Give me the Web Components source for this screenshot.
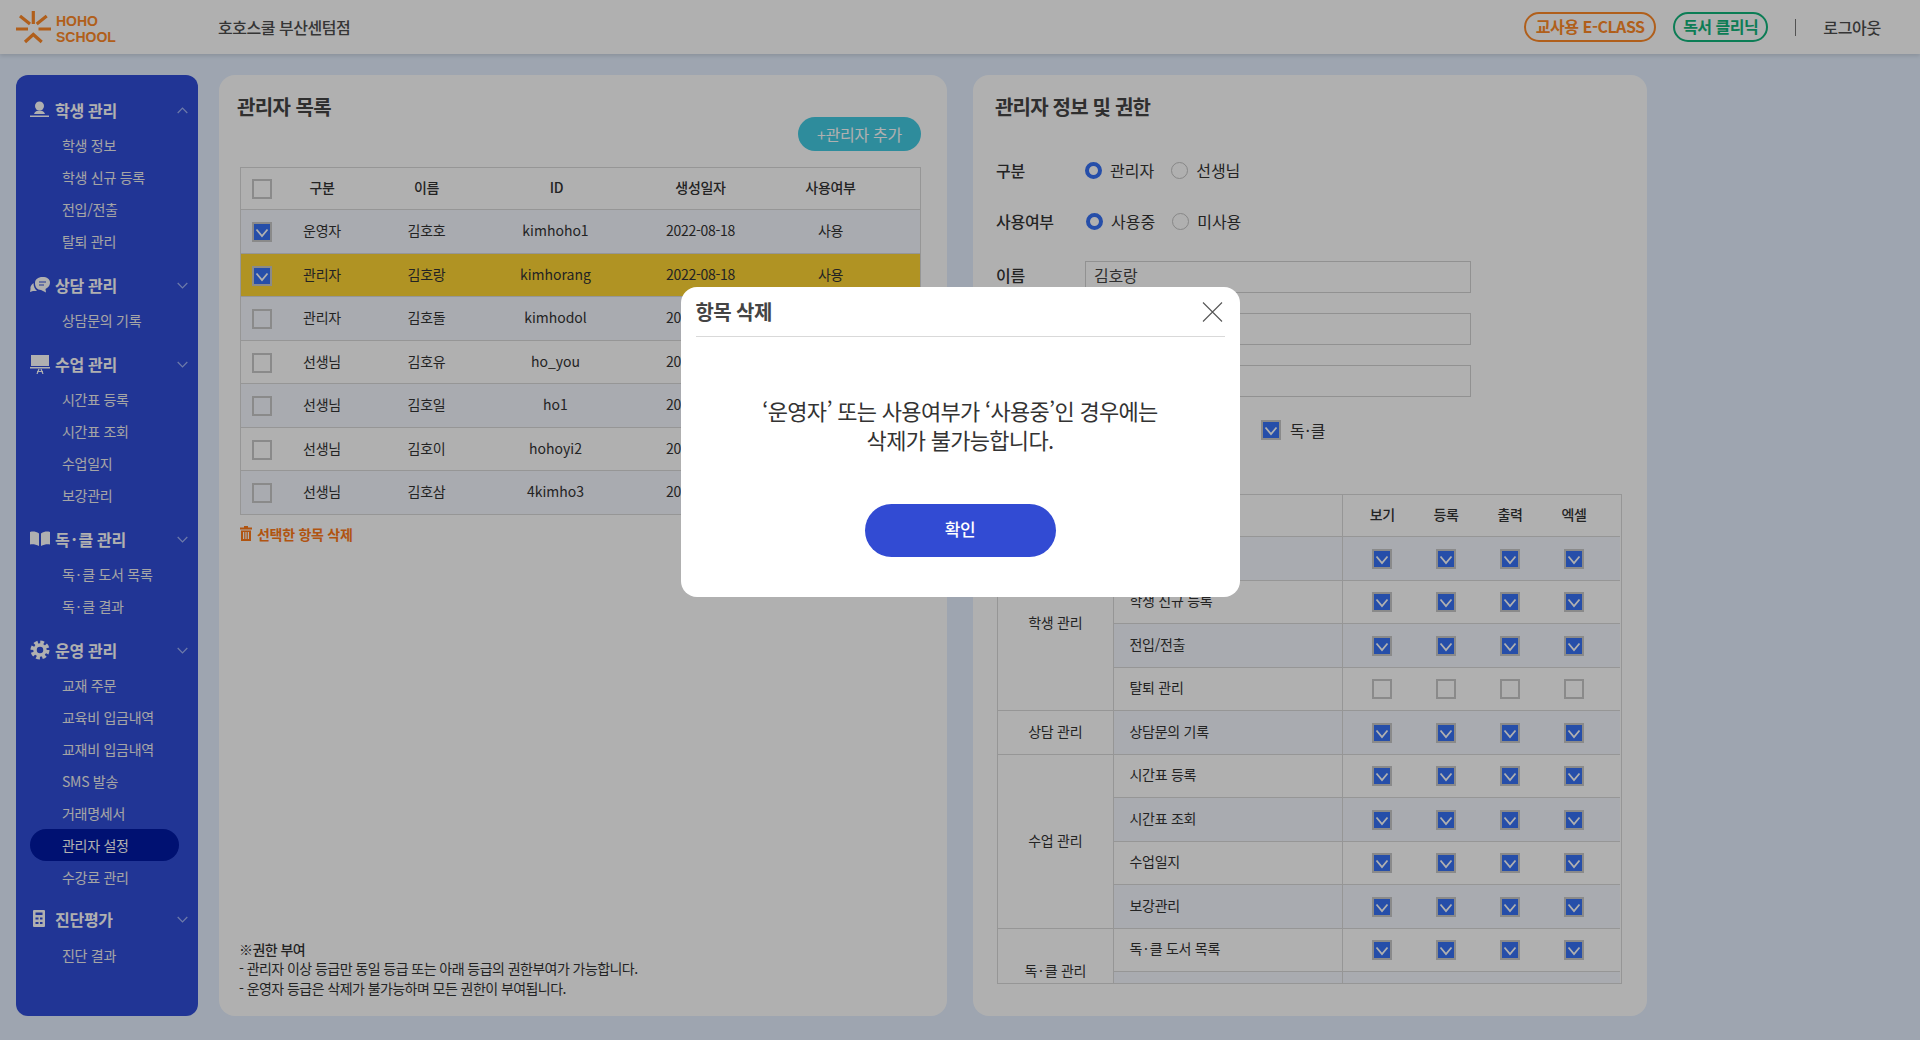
<!DOCTYPE html>
<html lang="ko">
<head>
<meta charset="utf-8">
<title>호호스쿨 관리자 설정</title>
<style>
  html, body { margin: 0; height: 100%; }
  body {
    background: #e5f0ff;
    color: #333;
    font-family: "Noto Sans CJK KR", "Noto Sans", sans-serif;
    font-size: 14px;
    letter-spacing: -0.02em;
    overflow: hidden;
  }
  .layout {
    display: grid;
    grid-template-columns: 182px 728px 679px;
    column-gap: 21px;
    height: 941px;
    padding: 21px 0 0 16px;
  }
  admin-detail { margin-left: 5px; }
</style>
</head>
<body>
<top-bar></top-bar>
<div class="layout">
  <side-nav></side-nav>
  <admin-list></admin-list>
  <admin-detail></admin-detail>
</div>
<confirm-modal title-text="항목 삭제" button-text="확인">
  ‘운영자’ 또는 사용여부가 ‘사용중’인 경우에는<br>삭제가 불가능합니다.
</confirm-modal>

<script>
// the middle dot sits wider in the reference than the font gives it
const DOT_CSS = '.dot { margin: 0 2px; }';
const dotted = (text) => text.replace('·', '<span class="dot">·</span>');

// small form controls
class CheckBox extends HTMLElement {
  connectedCallback() {
    const shadow = this.attachShadow({ mode: 'open' });
    const checked = this.hasAttribute('checked');
    shadow.innerHTML = `
      <style>
        :host { display: inline-block; width: 20px; height: 20px; vertical-align: middle; }
        .box { box-sizing: border-box; width: 20px; height: 20px; border: 2px solid #c8c8c8; background: ${checked ? '#3772f5' : 'transparent'}; }
        svg { display: block; }
      </style>
      <div class="box">${checked ? '<svg width="16" height="16" viewBox="0 0 16 16"><path d="M2.5 5.5 8 12l5.5-6.5" fill="none" stroke="#fff" stroke-width="1.8"/></svg>' : ''}</div>`;
  }
}
customElements.define('check-box', CheckBox);

class RadioOption extends HTMLElement {
  connectedCallback() {
    const shadow = this.attachShadow({ mode: 'open' });
    const on = this.hasAttribute('checked');
    shadow.innerHTML = `
      <style>
        :host { display: inline-flex; align-items: center; gap: 8px; font-size: 16px; line-height: 26px; letter-spacing: 0; }
        i { box-sizing: border-box; width: 17px; height: 17px; border-radius: 50%;
            border: ${on ? '4px solid #3772f5' : '1.5px solid #c4c4c4'}; }
      </style>
      <i></i><slot></slot>`;
  }
}
customElements.define('radio-option', RadioOption);

// header
class TopBar extends HTMLElement {
  connectedCallback() {
    this.attachShadow({ mode: 'open' }).innerHTML = `
      <style>
        :host { display: flex; align-items: center; height: 54px; padding: 0 39px 0 16px; background: #fff; box-shadow: 0 2px 4px rgba(0,0,0,.12); position: relative; }
        .logo { display: flex; width: 202px; align-items: center; }
        .logo svg { display: block; flex: none; }
        .logo div { margin: 3px 0 0 3px; color: #ff8a28; font: 700 14px/16px "Liberation Sans", sans-serif; letter-spacing: 0; }
        .branch { font-size: 16px; font-weight: 500; color: #4d4d4d; letter-spacing: -.03em; }
        .right { margin-left: auto; display: flex; align-items: center; }
        .pill { box-sizing: border-box; height: 30px; line-height: 25px; border: 2px solid; border-radius: 15px; font-size: 16px; font-weight: 700; text-align: center; letter-spacing: -.03em; }
        .eclass { width: 132px; color: #ff8a28; margin-right: 17px; }
        .clinic { width: 95px; color: #12b57c; }
        .sep { width: 1px; height: 17px; background: #777; margin: 0 27px; }
        .logout { font-size: 16px; font-weight: 500; color: #4d4d4d; }
      </style>
      <div class="logo">
        <svg width="37" height="36" viewBox="16 8 37 36" fill="none" stroke="#ff8a28" stroke-width="3.2">
          <path d="M33.3 10v13M20 15l10 8M46.7 15l-10 8M16 28h12M38.500 28H51M25 41l8.300-7.500L41.700 41"/>
        </svg>
        <div>HOHO<br>SCHOOL</div>
      </div>
      <div class="branch">호호스쿨 부산센텀점</div>
      <div class="right">
        <div class="pill eclass">교사용 E-CLASS</div>
        <div class="pill clinic">독서 클리닉</div>
        <div class="sep"></div>
        <div class="logout">로그아웃</div>
      </div>`;
  }
}
customElements.define('top-bar', TopBar);

// sidebar
const NAV_ICONS = {
  student: '<circle cx="9.500" cy="6" r="4.500"/><path d="M4 14c1-3 3-3.500 5.500-3.500s4.500 .5 5.500 3.500zM0 15.500h19V17H0z"/>',
  consult: '<path d="M5 8c0 4 2 7 6 7l5 2.500-.5-3.500C19 12 20 10 20 7.500 20 4 17 2 12.500 2S5 4.500 5 8z"/><path d="M3.500 8C1 10 0 12 .5 14l-.5 3 3-1h4C5 14.500 3.500 11.500 3.500 8z"/><path d="M9 7h7M9 10h5" stroke="#314dd8" stroke-width="1.200"/>',
  lesson: '<path d="M1 1h18v11H1zM0 13h20v1.500H0z"/><path d="M7 20l2-5M13 20l-2-5M7 17.500h6" stroke="currentColor" fill="none" stroke-width="1.200"/>',
  book: '<path d="M0 3c3-1 6-.5 9 1.500V17c-3-1.500-6-2-9-1.500zM20 3c-3-1-6-.5-9 1.500V17c3-1.500 6-2 9-1.500z"/>',
  gear: '<circle cx="10" cy="10" r="7.500" fill="none" stroke="currentColor" stroke-width="4" stroke-dasharray="3.600 2.290"/><circle cx="10" cy="10" r="5" fill="none" stroke="currentColor" stroke-width="3.500"/>',
  calc: '<path transform="translate(2)" fill-rule="evenodd" d="M2 1h10a1 1 0 0 1 1 1v15a1 1 0 0 1-1 1H2a1 1 0 0 1-1-1V2a1 1 0 0 1 1-1zM3.500 3.500v2.500h7V3.500zM3.500 8.500v2h3v-2zM8 8.500v2h2.500v-2zM3.500 13v2h3v-2zM8 13v2h2.500v-2z"/>'
};

const NAV_GROUPS = [
  { icon: 'student', label: '학생 관리', open: true, items: ['학생 정보', '학생 신규 등록', '전입/전출', '탈퇴 관리'] },
  { icon: 'consult', label: '상담 관리', items: ['상담문의 기록'] },
  { icon: 'lesson', label: '수업 관리', items: ['시간표 등록', '시간표 조회', '수업일지', '보강관리'] },
  { icon: 'book', label: '독·클 관리', items: ['독·클 도서 목록', '독·클 결과'] },
  { icon: 'gear', label: '운영 관리', items: ['교재 주문', '교육비 입금내역', '교재비 입금내역', 'SMS 발송', '거래명세서', '관리자 설정', '수강료 관리'] },
  { icon: 'calc', label: '진단평가', items: ['진단 결과'] }
];

class SideNav extends HTMLElement {
  connectedCallback() {
    const groups = NAV_GROUPS.map((g) => `
      <section>
        <h3>
          <svg class="ico" width="20" height="20" viewBox="0 0 20 20" fill="currentColor">${NAV_ICONS[g.icon]}</svg>
          <span>${dotted(g.label)}</span>
          <svg class="chev" width="11" height="7" viewBox="0 0 11 7" fill="none" stroke="#9fb2f5" stroke-width="1.2"><path d="${g.open ? 'M.7 6 5.500 1l4.800 5' : 'M.7 1l4.800 5 4.800-5'}"/></svg>
        </h3>
        <ul>${g.items.map((it) => `<li class="${it === '관리자 설정' ? 'active' : ''}">${dotted(it)}</li>`).join('')}</ul>
      </section>`).join('');
    this.attachShadow({ mode: 'open' }).innerHTML = `
      <style>
        ${DOT_CSS}
        :host { display: block; background: #314dd8; border-radius: 12px; color: #fff; padding: 19px 0 0 14px; box-sizing: border-box; }
        section { margin-bottom: 12px; }
        section:first-child { margin-bottom: 13px; }
        section:first-child ul { margin-top: 5px; }
        section:last-child ul { margin-top: 4px; }
        section:last-child { margin-top: -2px; }
        h3 { display: flex; align-items: center; margin: 0; height: 32px; font-size: 16px; font-weight: 700; }
        .ico { flex: none; width: 20px; margin-right: 5px; }
        h3 span { flex: 1; }
        .chev { margin-right: 10px; }
        ul { list-style: none; margin: 3px 0 0; padding: 0; }
        li { height: 32px; line-height: 32px; padding-left: 32px; font-size: 14px; width: 117px; border-radius: 16px; color: #f0f0f0; }
        .active { background: #001aa5; color: #fff; }
      </style>${groups}`;
  }
}
customElements.define('side-nav', SideNav);

// left panel
const ADMINS = [
  ['운영자', '김호호', 'kimhoho1', true],
  ['관리자', '김호랑', 'kimhorang', true, true],
  ['관리자', '김호돌', 'kimhodol'],
  ['선생님', '김호유', 'ho_you'],
  ['선생님', '김호일', 'ho1'],
  ['선생님', '김호이', 'hohoyi2'],
  ['선생님', '김호삼', '4kimho3']
];

class AdminList extends HTMLElement {
  connectedCallback() {
    const rows = ADMINS.map(([kind, name, id, checked, selected]) => `
      <tr class="${selected ? 'sel' : ''}">
        <td><check-box ${checked ? 'checked' : ''}></check-box></td>
        <td>${kind}</td><td>${name}</td><td class="id">${id}</td><td>2022-08-18</td><td>사용</td><td></td>
      </tr>`).join('');
    this.attachShadow({ mode: 'open' }).innerHTML = `
      <style>
        :host { display: flex; flex-direction: column; background: #fff; border-radius: 16px; padding: 18px 26px 18px 21px; box-sizing: border-box; }
        h2 { margin: 0 0 0 -3px; font-size: 20px; line-height: 28px; font-weight: 700; color: #444; letter-spacing: -.03em; }
        button { align-self: flex-end; margin-top: -4px; width: 123px; height: 34px; border: 0; border-radius: 17px; background: #43cbe2; color: #fff; font: inherit; font-size: 16px; letter-spacing: inherit; padding: 0; }
        table { margin-top: 16px; width: 680px; border-collapse: collapse; table-layout: fixed; border: 1px solid #d9d9d9; text-align: center; color: #333; }
        th { box-sizing: border-box; height: 42px; font-weight: 500; padding: 0 0 4px; }
        th:first-child { padding-bottom: 2px; }
        td { box-sizing: border-box; height: 43.500px; padding: 0 0 2px; border-top: 1px solid #d9d9d9; }
        td:first-child { padding-bottom: 0; }
        .id { letter-spacing: 0; padding-right: 2px; }
        tbody tr:nth-child(odd) { background: #f5f8ff; }
        tbody tr.sel { background: #ffd533; }
        .del { display: flex; align-items: center; gap: 5px; margin-top: 9px; color: #ff7a18; font-weight: 700; line-height: 20px; }
        .note { margin: auto 0 0 -1px; line-height: 19.500px; color: #333; letter-spacing: -.04em; }
        .note b { font-weight: 500; }
      </style>
      <h2>관리자 목록</h2>
      <button>+관리자 추가</button>
      <table>
        <colgroup><col width="43"><col width="77"><col width="132"><col width="128"><col width="160"><col width="100"><col width="40"></colgroup>
        <thead><tr><th><check-box></check-box></th><th>구분</th><th>이름</th><th>ID</th><th>생성일자</th><th>사용여부</th><th></th></tr></thead>
        <tbody>${rows}</tbody>
      </table>
      <div class="del">
        <svg width="12" height="15" viewBox="0 0 12 15" fill="#ff7a18"><path d="M4 0h4v1.500h4V3.500H0V1.500h4zM1 4.500h10V15H1zM3 6v7h1.200V6zM5.400 6v7h1.200V6zM7.800 6v7H9V6z" fill-rule="evenodd"/></svg>
        선택한 항목 삭제
      </div>
      <div class="note"><b>※권한 부여</b><br>- 관리자 이상 등급만 동일 등급 또는 아래 등급의 권한부여가 가능합니다.<br>- 운영자 등급은 삭제가 불가능하며 모든 권한이 부여됩니다.</div>`;
  }
}
customElements.define('admin-list', AdminList);

// right panel
const PERMS = [
  ['학생 관리', 4, '학생 정보', true],
  [null, 0, '학생 신규 등록', true],
  [null, 0, '전입/전출', true],
  [null, 0, '탈퇴 관리', false],
  ['상담 관리', 1, '상담문의 기록', true],
  ['수업 관리', 4, '시간표 등록', true],
  [null, 0, '시간표 조회', true],
  [null, 0, '수업일지', true],
  [null, 0, '보강관리', true],
  ['독·클 관리', 2, '독·클 도서 목록', true],
  [null, 0, '독·클 결과', true]
];

class PermTable extends HTMLElement {
  connectedCallback() {
    const box = (on) => `<check-box ${on ? 'checked' : ''}></check-box>`;
    const rows = PERMS.map(([group, span, menu, on], i) => `
      <tr class="${i % 2 === 0 ? 'tint' : ''}">
        ${group ? `<td class="group" rowspan="${span}">${dotted(group)}</td>` : ''}
        <td class="menu">${dotted(menu)}</td>
        <td class="first">${box(on)}</td><td>${box(on)}</td><td>${box(on)}</td><td class="last">${box(on)}</td>
      </tr>`).join('');
    this.attachShadow({ mode: 'open' }).innerHTML = `
      <style>
        ${DOT_CSS}
        :host { display: block; width: 625px; height: 490px; overflow: hidden; box-sizing: border-box; border: 1px solid #d9d9d9; }
        table { width: 622px; border-collapse: collapse; table-layout: fixed; text-align: center; color: #333; }
        th { box-sizing: border-box; height: 41.500px; font-weight: 500; padding: 0 0 3px; }
        td { box-sizing: border-box; height: 43.500px; padding: 0 0 1px; border-top: 1px solid #d9d9d9; }
        .group { background: #fff; padding-bottom: 3px; }
        .menu { text-align: left; padding: 0 0 3px 16px; border-left: 1px solid #d9d9d9; border-right: 1px solid #d9d9d9; }
        th.sl { border-left: 1px solid #d9d9d9; border-right: 1px solid #d9d9d9; }
        .tint td:not(.group) { background: #f5f8ff; }
        .first { padding-left: 8px; }
        .last { padding-right: 14px; }
      </style>
      <table>
        <colgroup><col width="115"><col width="229"><col width="72"><col width="64"><col width="64"><col width="78"></colgroup>
        <thead><tr><th></th><th class="sl"></th><th class="first">보기</th><th>등록</th><th>출력</th><th class="last">엑셀</th></tr></thead>
        <tbody>${rows}</tbody>
      </table>`;
  }
}
customElements.define('perm-table', PermTable);

class AdminDetail extends HTMLElement {
  connectedCallback() {
    this.attachShadow({ mode: 'open' }).innerHTML = `
      <style>
        .dot { margin: 0 1px; }
        :host { display: block; background: #fff; border-radius: 16px; padding: 18px 0 0 23px; box-sizing: border-box; }
        h2 { margin: 0 0 36px -1px; font-size: 20px; line-height: 28px; font-weight: 700; color: #444; letter-spacing: -.04em; }
        .row { display: flex; align-items: center; min-height: 26px; margin-bottom: 25px; font-size: 16px; }
        .row > label { width: 89px; font-weight: 500; color: #333; }
        .row radio-option + radio-option { margin-left: 17px; }
        .use { margin-bottom: 27px; }
        .use > label { width: 90px; }
        .input { box-sizing: border-box; width: 386px; height: 32px; border: 1px solid #d2d2d2; padding-left: 8px; line-height: 26px; color: #444; }
        .field { margin-bottom: 20px; }
        .field > label { margin-top: -4px; }
        .ck { margin: 0 0 51px 265px; gap: 9px; }
        perm-table { margin-left: 1px; }
      </style>
      <h2>관리자 정보 및 권한</h2>
      <div class="row"><label>구분</label><radio-option checked>관리자</radio-option><radio-option>선생님</radio-option></div>
      <div class="row use"><label>사용여부</label><radio-option checked>사용중</radio-option><radio-option>미사용</radio-option></div>
      <div class="row field"><label>이름</label><div class="input">김호랑</div></div>
      <div class="row field"><label></label><div class="input"></div></div>
      <div class="row field"><label></label><div class="input"></div></div>
      <div class="row ck"><check-box checked></check-box><span>${dotted('독·클')}</span></div>
      <perm-table></perm-table>`;
  }
}
customElements.define('admin-detail', AdminDetail);

// modal over the page
class ConfirmModal extends HTMLElement {
  connectedCallback() {
    this.attachShadow({ mode: 'open' }).innerHTML = `
      <style>
        :host { position: fixed; inset: 0; background: rgba(0,0,0,.31); display: flex; justify-content: center; align-items: flex-start; padding-top: 287px; box-sizing: border-box; }
        .dialog { box-sizing: border-box; width: 559px; height: 310px; background: #fff; border-radius: 16px; padding: 0 15px; display: flex; flex-direction: column; align-items: center; }
        header { align-self: stretch; display: flex; align-items: center; justify-content: space-between; height: 50px; border-bottom: 1px solid #d9d9d9; box-sizing: border-box; }
        h2 { margin: 0; font-size: 20px; font-weight: 700; color: #444; letter-spacing: -.03em; }
        header svg { margin-right: 2px; }
        p { margin: 59px 0 0; font-size: 22px; line-height: 29px; letter-spacing: -.7px; color: #333; text-align: center; height: 58px; }
        button { margin-top: 50px; width: 191px; height: 53px; border: 0; border-radius: 27px; background: #324bd3; color: #fff; font: inherit; font-size: 17px; font-weight: 500; letter-spacing: inherit; padding: 0 0 4px; }
      </style>
      <div class="dialog">
        <header>
          <h2>${this.getAttribute('title-text')}</h2>
          <svg width="21" height="20" viewBox="0 0 21 20" fill="none" stroke="#555" stroke-width="1.100"><path d="M1 .5l19 19M20 .5l-19 19"/></svg>
        </header>
        <p><slot></slot></p>
        <button>${this.getAttribute('button-text')}</button>
      </div>`;
  }
}
customElements.define('confirm-modal', ConfirmModal);
</script>
</body>
</html>
